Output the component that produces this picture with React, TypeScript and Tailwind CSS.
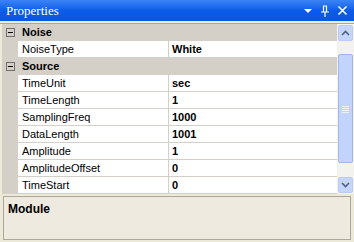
import React from "react";

type Row =
  | { kind: "cat"; label: string }
  | { kind: "prop"; name: string; value: string };

const rows: Row[] = [
  { kind: "cat", label: "Noise" },
  { kind: "prop", name: "NoiseType", value: "White" },
  { kind: "cat", label: "Source" },
  { kind: "prop", name: "TimeUnit", value: "sec" },
  { kind: "prop", name: "TimeLength", value: "1" },
  { kind: "prop", name: "SamplingFreq", value: "1000" },
  { kind: "prop", name: "DataLength", value: "1001" },
  { kind: "prop", name: "Amplitude", value: "1" },
  { kind: "prop", name: "AmplitudeOffset", value: "0" },
  { kind: "prop", name: "TimeStart", value: "0" },
];

const font = { fontFamily: '"Liberation Sans", Arial, sans-serif' };

function MinusBox() {
  return (
    <svg width="9" height="9" viewBox="0 0 9 9" className="block">
      <rect x="0.5" y="0.5" width="8" height="8" fill="none" stroke="#6f6f6f" />
      <path d="M2 4.5h5" stroke="#000" />
    </svg>
  );
}

function TitleBar() {
  return (
    <div className="flex h-[21px] items-center bg-gradient-to-b from-[#3b84f7] via-[#0b5ce8] to-[#0856e2] pl-[6px] pr-[6px] text-white">
      <span className="text-[13px] leading-none" style={{ fontFamily: '"Liberation Serif", serif' }}>
        Properties
      </span>
      <div className="ml-auto flex items-center gap-[7px]">
        <svg width="10" height="10" viewBox="0 0 10 10">
          <path d="M1 3h8L5 7z" fill="#fff" />
        </svg>
        <svg width="10" height="12" viewBox="0 0 10 12">
          <path d="M3 1h4M3.5 1v6M6.5 1v6M1 7h8M5 7v5" stroke="#fff" fill="none" strokeWidth="1.2" />
        </svg>
        <svg width="11" height="11" viewBox="0 0 11 11">
          <path d="M1.5 1.5l8 8M9.5 1.5l-8 8" stroke="#fff" strokeWidth="1.6" />
        </svg>
      </div>
    </div>
  );
}

function ScrollBar() {
  return (
    <div className="flex w-[17px] flex-col bg-[#f3f2ee] py-[1px] pl-[1px]">
      <div className="flex h-[16px] w-[15px] items-center justify-center rounded-[2px] border border-[#b8cdf6] bg-[#c6d6fb]">
        <svg width="9" height="6" viewBox="0 0 9 6">
          <path d="M1 5l3.5-3.5L8 5" stroke="#4d6185" strokeWidth="1.6" fill="none" />
        </svg>
      </div>
      <div className="mt-[13px] flex h-[109px] w-[15px] items-center justify-center rounded-[2px] border border-[#9fb6ef] bg-[#c3d4fc]">
        <svg width="7" height="8" viewBox="0 0 7 8">
          <path d="M0 1.5h7M0 3.5h7M0 5.5h7M0 7.5h7" stroke="#eef3ff" />
        </svg>
      </div>
      <div className="mt-auto flex h-[16px] w-[15px] items-center justify-center rounded-[2px] border border-[#b8cdf6] bg-[#c6d6fb]">
        <svg width="9" height="6" viewBox="0 0 9 6">
          <path d="M1 1l3.5 3.5L8 1" stroke="#4d6185" strokeWidth="1.6" fill="none" />
        </svg>
      </div>
    </div>
  );
}

export default function App() {
  return (
    <div className="flex h-[242px] w-[354px] flex-col bg-[#ece9d8] text-[11px] text-black" style={font}>
      <TitleBar />
      <div className="h-[1px] bg-[#ece9d8]" />
      <div className="mt-[1px] flex h-[171px] border-t border-[#aca899] pl-[2px]">
        <div className="flex flex-1 flex-col bg-[#d4d0c8]">
          {rows.map((r, i) =>
            r.kind === "cat" ? (
              <div key={i} className="flex h-[17px] items-center">
                <div className="flex w-[16px] justify-center pl-[1px]">
                  <MinusBox />
                </div>
                <span className="pl-[4px] font-bold">{r.label}</span>
              </div>
            ) : (
              <div key={i} className="flex h-[17px]">
                <div className="w-[16px]" />
                <div className="flex w-[151px] items-center border-r border-b border-[#d4d0c8] bg-white pl-[4px]">
                  {r.name}
                </div>
                <div className="flex flex-1 items-center border-b border-[#d4d0c8] bg-white pl-[3px] font-bold">
                  {r.value}
                </div>
              </div>
            )
          )}
        </div>
        <ScrollBar />
      </div>
      <div className="mx-[3px] mt-[2px] h-[44px] border border-[#aca899] bg-[#eeeadf] px-[4px] pt-[3px]">
        <span className="text-[12px] font-bold">Module</span>
      </div>
    </div>
  );
}
